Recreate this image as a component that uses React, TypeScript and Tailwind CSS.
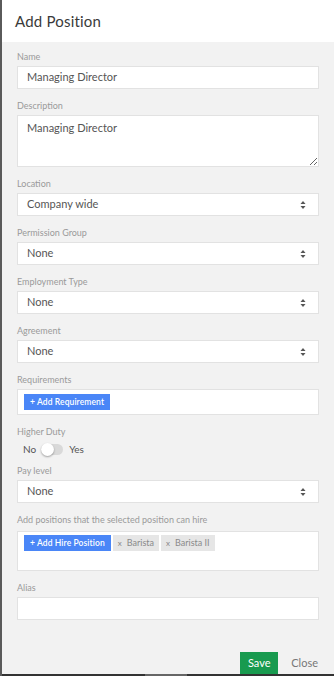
import React from 'react';

const font = { fontFamily: 'Lato, "Open Sans", sans-serif' };

function Label({ children }: { children: React.ReactNode }) {
  return <div className="text-[9px] leading-[12px] text-[#9a9a9a] mb-[3px]">{children}</div>;
}

function SelectArrows() {
  return (
    <svg width="6" height="9" viewBox="0 0 6 9" className="absolute right-[12px] top-1/2 -translate-y-1/2">
      <path d="M3 0.5 L5.5 3.5 H0.5 Z" fill="#555" />
      <path d="M3 8.5 L5.5 5.5 H0.5 Z" fill="#555" />
    </svg>
  );
}

function SelectField({ label, value }: { label: string; value: string }) {
  return (
    <div className="mb-[11px]">
      <Label>{label}</Label>
      <div className="relative h-[23px] bg-white border border-[#e2e2e2] flex items-center pl-[9px] text-[11px] text-[#555]">
        {value}
        <SelectArrows />
      </div>
    </div>
  );
}

function BlueButton({ children }: { children: React.ReactNode }) {
  return (
    <span className="inline-flex items-center h-[16px] px-[6px] bg-[#4a86f7] text-white text-[8.5px] font-semibold tracking-[0.1px]">
      {children}
    </span>
  );
}

function Chip({ children }: { children: React.ReactNode }) {
  return (
    <span className="inline-flex items-center h-[16px] px-[5px] bg-[#e6e6e6] text-[#8a8a8a] text-[9px] gap-[5px]">
      <span className="text-[8px]">x</span>
      {children}
    </span>
  );
}

export default function App() {
  return (
    <div className="w-[334px] h-[676px] flex flex-col bg-[#f2f2f2] border-l-2 border-[#5a5a5a] overflow-hidden" style={font}>
      <div className="h-[42px] bg-white flex items-center pl-[13px] shrink-0">
        <span className="text-[15px] text-[#3a3a3a] tracking-[0.2px]">Add Position</span>
      </div>

      <div className="flex-1 pt-[9px] pl-[15px] pr-[15px]">
        <div className="mb-[11px]">
          <Label>Name</Label>
          <div className="h-[23px] bg-white border border-[#e2e2e2] flex items-center pl-[9px] text-[11px] text-[#555]">
            Managing Director
          </div>
        </div>

        <div className="mb-[11px]">
          <Label>Description</Label>
          <textarea
            defaultValue="Managing Director"
            className="block w-full h-[52px] bg-white border border-[#e2e2e2] pl-[9px] pt-[4px] text-[11px] text-[#555] outline-none resize"
            style={font}
          />
        </div>

        <SelectField label="Location" value="Company wide" />
        <SelectField label="Permission Group" value="None" />
        <SelectField label="Employment Type" value="None" />
        <SelectField label="Agreement" value="None" />

        <div className="mb-[11px]">
          <Label>Requirements</Label>
          <div className="h-[26px] bg-white border border-[#e2e2e2] flex items-center pl-[6px]">
            <BlueButton>+ Add Requirement</BlueButton>
          </div>
        </div>

        <div className="mb-[8px]">
          <div className="text-[9px] leading-[12px] text-[#9a9a9a]">Higher Duty</div>
          <div className="h-[16px] mt-[3px] flex items-center pl-[6px] gap-[5px] text-[10px] text-[#555]">
            <span>No</span>
            <span className="relative w-[22px] h-[11px] rounded-full bg-[#d9d9d9]">
              <span className="absolute left-0 top-[-1px] w-[13px] h-[13px] rounded-full bg-white shadow-[0_1px_2px_rgba(0,0,0,0.35)]" />
            </span>
            <span className="ml-[1px]">Yes</span>
          </div>
        </div>

        <SelectField label="Pay level" value="None" />

        <div className="mb-[11px]">
          <div className="text-[9px] leading-[12px] text-[#9a9a9a] mb-[5px]">Add positions that the selected position can hire</div>
          <div className="h-[40px] bg-white border border-[#e2e2e2] flex items-start pt-[3px] pl-[6px] gap-[2px]">
            <BlueButton>+ Add Hire Position</BlueButton>
            <Chip>Barista</Chip>
            <Chip>Barista II</Chip>
          </div>
        </div>

        <div>
          <Label>Alias</Label>
          <div className="h-[23px] bg-white border border-[#e2e2e2]" />
        </div>

        <div className="flex justify-end items-end mt-[32px] pr-0">
          <span className="h-[22px] w-[38px] bg-[#189a4f] text-white text-[11px] flex items-center justify-center">Save</span>
          <span className="ml-[13px] mr-[1px] text-[11px] text-[#777] h-[22px] flex items-center">Close</span>
        </div>
      </div>

      <div className="h-[2px] bg-[#333] shrink-0 flex">
        <div className="ml-[143px] w-[42px] bg-[#666]" />
      </div>
    </div>
  );
}
